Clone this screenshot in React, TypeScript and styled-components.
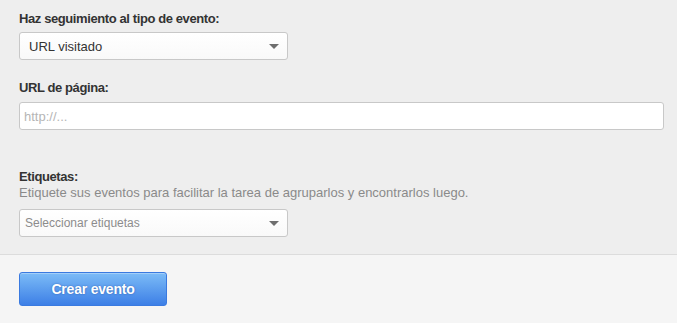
import React from "react";
import styled, { createGlobalStyle } from "styled-components";

const Global = createGlobalStyle`
  html, body { margin: 0; padding: 0; background: #eeeeee; }
  body { font-family: "Liberation Sans", Arial, Helvetica, sans-serif; }
  * { box-sizing: border-box; }
`;

const Page = styled.div`
  width: 677px;
  height: 323px;
  display: flex;
  flex-direction: column;
  background: #eeeeee;
`;

const Body = styled.div`
  padding: 11px 13px 17px 19px;
  display: flex;
  flex-direction: column;
`;

const Field = styled.div<{ $gap?: number }>`
  display: flex;
  flex-direction: column;
  margin-top: ${(p) => p.$gap ?? 0}px;
`;

const Label = styled.label`
  font-size: 13px;
  line-height: 16px;
  font-weight: bold;
  letter-spacing: -0.4px;
  color: #333333;
`;

const Help = styled.div`
  font-size: 13px;
  line-height: 16px;
  color: #8a8a8a;
`;

const Select = styled.div<{ $mt: number; $placeholder?: boolean }>`
  position: relative;
  margin-top: ${(p) => p.$mt}px;
  width: 269px;
  height: 28px;
  border: 1px solid #c8c8c8;
  border-radius: 3px;
  background: linear-gradient(#ffffff, #f9f9f9);
  display: flex;
  align-items: center;
  padding: 0 24px 0 ${(p) => (p.$placeholder ? 5 : 9)}px;
  font-size: ${(p) => (p.$placeholder ? 12 : 13)}px;
  color: ${(p) => (p.$placeholder ? "#8c8c8c" : "#333333")};
`;

const Caret = styled.span`
  position: absolute;
  right: 8px;
  top: 11px;
  width: 0;
  height: 0;
  border-left: 5px solid transparent;
  border-right: 5px solid transparent;
  border-top: 5px solid #6e6e6e;
`;

const Input = styled.input`
  margin-top: 6px;
  width: 645px;
  height: 28px;
  border: 1px solid #c8c8c8;
  border-radius: 3px;
  background: #ffffff;
  padding: 0 4px;
  font-family: "Liberation Sans", Arial, sans-serif;
  font-size: 13px;
  color: #333;
  outline: none;
  &::placeholder { color: #b5b5b5; }
`;

const Footer = styled.div`
  flex: 1;
  border-top: 1px solid #dcdcdc;
  background: #f5f5f5;
  padding: 17px 19px;
`;

const Button = styled.button`
  width: 148px;
  height: 34px;
  border: 1px solid #3a7ae0;
  border-radius: 3px;
  background: linear-gradient(#7cbcf7, #3d7fe6);
  color: #ffffff;
  font-family: "Liberation Sans", Arial, sans-serif;
  font-size: 14px;
  font-weight: bold;
  letter-spacing: -0.2px;
  text-shadow: 0 0 2px rgba(20, 60, 140, 0.6);
  box-shadow: inset 0 1px 0 rgba(255, 255, 255, 0.3);
  cursor: pointer;
`;

export default function App() {
  return (
    <Page>
      <Global />
      <Body>
        <Field>
          <Label>Haz seguimiento al tipo de evento:</Label>
          <Select $mt={5}>
            URL visitado
            <Caret />
          </Select>
        </Field>
        <Field $gap={20}>
          <Label>URL de página:</Label>
          <Input placeholder="http://..." />
        </Field>
        <Field $gap={39}>
          <Label>Etiquetas:</Label>
          <Help>Etiquete sus eventos para facilitar la tarea de agruparlos y encontrarlos luego.</Help>
          <Select $mt={8} $placeholder>
            Seleccionar etiquetas
            <Caret />
          </Select>
        </Field>
      </Body>
      <Footer>
        <Button>Crear evento</Button>
      </Footer>
    </Page>
  );
}
